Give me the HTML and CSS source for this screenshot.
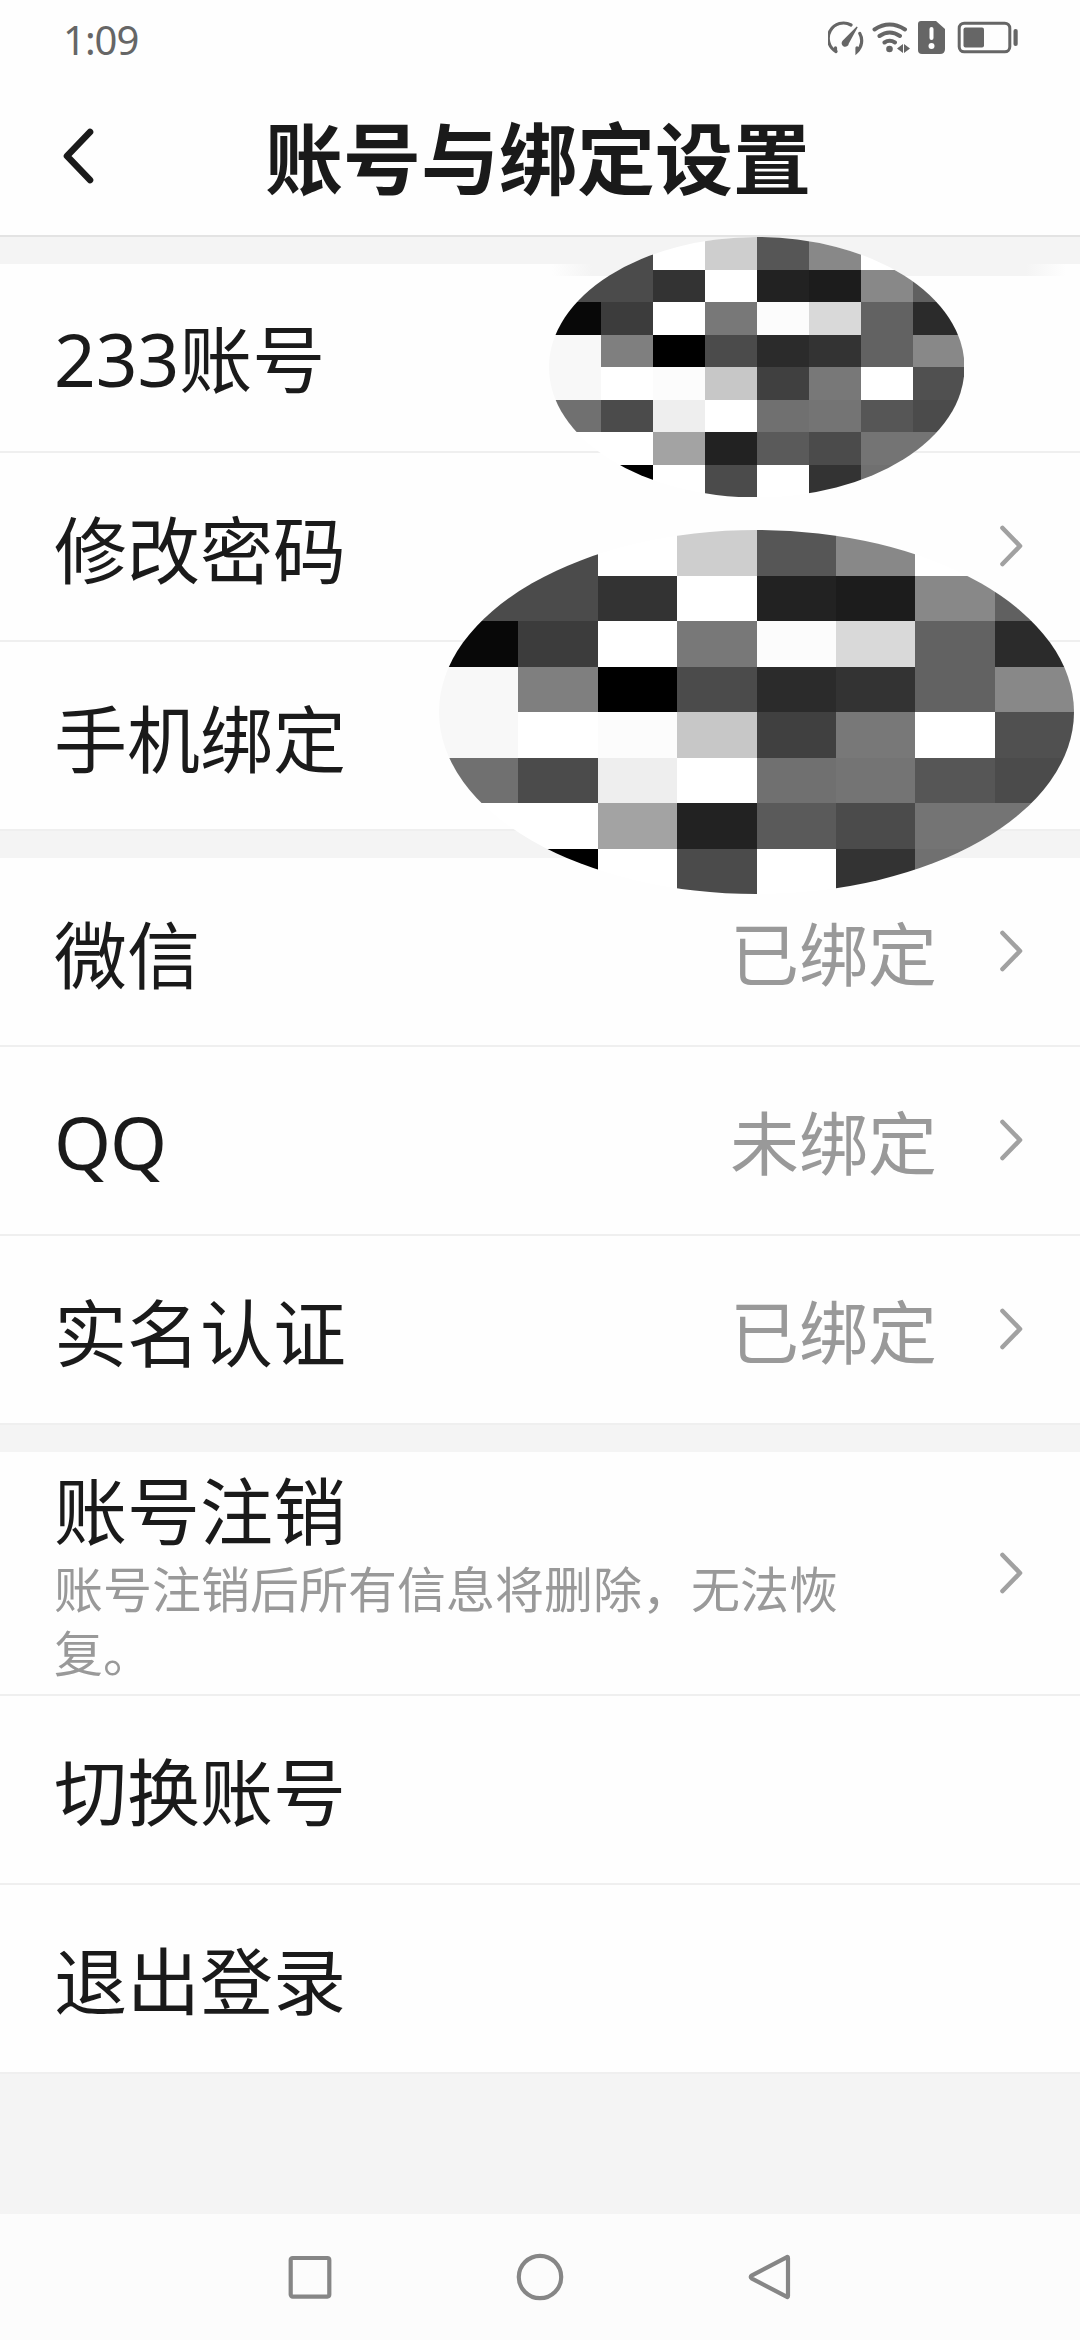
FILE: index.html
```
<!DOCTYPE html>
<html lang="zh-CN">
<head>
<meta charset="utf-8">
<title>账号与绑定设置</title>
<link rel="stylesheet" href="styles.css">
</head>
<body>
<svg class="defs" aria-hidden="true">
  <symbol id="chevron" viewBox="0 0 24 42"><path d="M2.5 3 L20 21 L2.5 39" fill="none" stroke="#a1a1a1" stroke-width="4.6" stroke-linecap="round" stroke-linejoin="round"/></symbol>
  <symbol id="mosaic" viewBox="0 0 8 8" preserveAspectRatio="none">
    <clipPath id="oval"><ellipse cx="4" cy="4" rx="4" ry="4"/></clipPath>
    <g clip-path="url(#oval)">
      <g shape-rendering="crispEdges">
      <rect width="8" height="8" fill="#fff"/>
      <path fill="#4b4b4b" d="M0 0h2v2H0zM7 5h1v1H7zM3 3h1v1H3zM5 6h1v1H5zM1 5h1v1H1zM3 7h1v1H3z"/>
      <path fill="#cecece" d="M3 0h1v1H3z"/>
      <path fill="#565656" d="M4 0h1v1H4zM6 5h1v1H6z"/>
      <path fill="#888" d="M5 0h1v1H5zM7 3h1v1H7zM6 1h1v1H6z"/>
      <path fill="#333" d="M2 1h1v1H2zM5 3h1v1H5zM5 7h1v1H5z"/>
      <path fill="#222" d="M4 1h1v1H4zM3 6h1v1H3z"/>
      <path fill="#1c1c1c" d="M5 1h1v1H5z"/>
      <path fill="#606060" d="M7 1h1v1H7z"/>
      <path fill="#080808" d="M0 2h1v1H0z"/>
      <path fill="#3c3c3c" d="M1 2h1v1H1z"/>
      <path fill="#787878" d="M3 2h1v1H3zM5 4h1v1H5z"/>
      <path fill="#fcfcfc" d="M4 2h1v1H4zM2 4h1v1H2z"/>
      <path fill="#d9d9d9" d="M5 2h1v1H5z"/>
      <path fill="#626262" d="M6 2h1v2H6z"/>
      <path fill="#2b2b2b" d="M7 2h1v1H7zM4 3h1v1H4z"/>
      <path fill="#f8f8f8" d="M0 3h1v2H0z"/>
      <path fill="#7f7f7f" d="M1 3h1v1H1z"/>
      <path fill="#000" d="M2 3h1v1H2zM1 7h1v1H1z"/>
      <path fill="#c7c7c7" d="M3 4h1v1H3z"/>
      <path fill="#404040" d="M4 4h1v1H4z"/>
      <path fill="#505050" d="M7 4h1v1H7z"/>
      <path fill="#707070" d="M0 5h1v1H0zM4 5h1v1H4zM6 7h2v1H6z"/>
      <path fill="#747474" d="M5 5h1v1H5zM6 6h2v1H6z"/>
      <path fill="#eee" d="M2 5h1v1H2z"/>
      <path fill="#a3a3a3" d="M2 6h1v1H2z"/>
      <path fill="#5a5a5a" d="M4 6h1v1H4z"/>
      </g>
    </g>
  </symbol>
</svg>

<div class="status">
  <span class="time">1:09</span>
  <svg class="status-icons" viewBox="0 0 190 36" fill="none" stroke="#666" stroke-linecap="round">
    <path d="M7.5 31 V27.8 M8 31.5 A14.8 14.8 0 0 1 23 5 M31.8 13.5 A14.8 14.8 0 0 1 29 31.5 V27.8" stroke-width="3.2"/>
    <path d="M28.7 6.5 L14.8 20.5 A3.6 3.6 0 1 0 20.8 23.5 L29.7 7.2 Z" fill="#666" stroke="none"/>
    <path d="M46.5 9.5 Q61.5 -.5 77 9.5 M51.5 16 Q61.5 9 72 16 M56.5 22.5 Q61.5 19 67 22.5" stroke-width="4"/>
    <circle cx="61.5" cy="29" r="3.3" fill="#666" stroke="none"/>
    <path d="M69 28.5 L75 24 V33 Z M76 24 L82 28.5 L76 33 Z" fill="#666" stroke="none"/>
    <path d="M93 1 H108 L117 9 V29 Q117 34 112 34 H94 Q90 34 90 30 V4 Q90 1 93 1 Z" fill="#666" stroke="none"/>
    <path d="M103.5 9 V18" stroke="#fff" stroke-width="4"/><circle cx="103.5" cy="26" r="3" fill="#fff" stroke="none"/>
    <rect x="131.2" y="3.2" width="50.6" height="28.6" rx="5" stroke-width="3"/>
    <rect x="135.5" y="7.5" width="20.5" height="20" rx="2" fill="#666" stroke="none"/>
    <rect x="185.5" y="9" width="4.2" height="17" rx="2" fill="#666" stroke="none"/>
  </svg>
</div>

<header class="header">
  <svg class="back" viewBox="0 0 32 56"><path d="M27 4 L4 28 L27 52" fill="none" stroke="#1a1a1a" stroke-width="6.6" stroke-linecap="round" stroke-linejoin="round"/></svg>
  <h1 class="title">账号与绑定设置</h1>
</header>

<main class="main">
  <section class="group">
    <div class="row"><span class="label"><span class="latin">233</span>账号</span></div>
    <div class="row"><span class="label">修改密码</span><svg class="chevron"><use href="#chevron"/></svg></div>
    <div class="row"><span class="label">手机绑定</span></div>
  </section>
  <section class="group">
    <div class="row"><span class="label">微信</span><span class="value">已绑定</span><svg class="chevron"><use href="#chevron"/></svg></div>
    <div class="row"><span class="label"><span class="latin latin-tight">QQ</span></span><span class="value">未绑定</span><svg class="chevron"><use href="#chevron"/></svg></div>
    <div class="row"><span class="label">实名认证</span><span class="value">已绑定</span><svg class="chevron"><use href="#chevron"/></svg></div>
  </section>
  <section class="group">
    <div class="row row-tall">
      <div class="texts"><div class="label">账号注销</div><p class="desc">账号注销后所有信息将删除，无法恢复。</p></div>
      <svg class="chevron"><use href="#chevron"/></svg>
    </div>
    <div class="row row-action"><span class="label">切换账号</span></div>
    <div class="row row-action"><span class="label">退出登录</span></div>
  </section>
</main>

<nav class="nav">
  <svg class="nav-icon" viewBox="0 0 50 50"><rect x="5.7" y="6" width="38.6" height="38.6" rx="2" /></svg>
  <svg class="nav-icon" viewBox="0 0 50 50"><circle cx="25" cy="25" r="21.2"/></svg>
  <svg class="nav-icon" viewBox="0 0 50 50"><path d="M41.5 5.4 Q43 4.3 43 6 V44 Q43 45.7 41.5 44.6 L7 26.6 Q4.4 25 7 23.4 Z"/></svg>
</nav>

<div class="halo"></div>
<svg class="cover cover-id"><use href="#mosaic"/></svg>
<svg class="cover cover-phone"><use href="#mosaic"/></svg>
</body>
</html>
```

FILE: styles.css
```
* { box-sizing: border-box; }

body {
  position: relative;
  display: flex;
  flex-direction: column;
  width: 1080px;
  height: 2340px;
  margin: 0;
  overflow: hidden;
  background: #f4f4f4;
  color: #1a1a1a;
  font-family: "Noto Sans CJK SC", sans-serif;
}

.defs { position: absolute; width: 0; height: 0; }

.status {
  display: flex;
  justify-content: space-between;
  align-items: center;
  height: 76px;
  padding: 0 62px 0 63px;
  background: #fefefe;
}

.time {
  padding-top: 3px;
  color: #666;
  font: 40px/76px "Noto Sans", sans-serif;
  letter-spacing: -1px;
}

.status-icons { width: 190px; height: 36px; }

.header {
  display: grid;
  grid-template-columns: 63px 32px 1fr 99px;
  align-items: center;
  height: 161px;
  border-bottom: 2px solid #e3e3e3;
  background: #fefefe;
}

.back { grid-column: 2; width: 32px; height: 56px; }

.title {
  grid-column: 3;
  margin: 0;
  font-size: 78px;
  font-weight: 700;
  line-height: 159px;
  text-align: center;
}

.main {
  display: flex;
  flex: 1;
  flex-direction: column;
  gap: 27px;
  padding-top: 27px;
}

.group { background: #fefefe; }

.row {
  display: flex;
  align-items: center;
  height: 189px;
  padding: 0 56px 1px 54px;
  border-bottom: 2px solid #efefef;
}

.row-tall { height: 244px; }

.row-action { padding-bottom: 4px; }

.label { font-size: 73px; line-height: 92px; white-space: nowrap; }

.latin { font-family: "Noto Sans", sans-serif; }

.latin-tight { letter-spacing: -1px; }

.value {
  margin-left: auto;
  color: #999;
  font-size: 69px;
  line-height: 92px;
}

.chevron { width: 24px; height: 42px; margin-left: auto; }

.value + .chevron { margin-left: 63px; }

.texts { width: 800px; }

.texts .label { line-height: 88px; }

.desc {
  margin: 4px 0 0;
  color: #999;
  font-size: 49px;
  line-height: 64px;
}

.nav {
  display: flex;
  justify-content: center;
  align-items: center;
  gap: 180px;
  height: 126px;
  background: #fcfcfc;
}

.nav-icon {
  width: 50px;
  height: 50px;
  fill: none;
  stroke: #868686;
  stroke-width: 4.2;
  stroke-linejoin: round;
}

.halo {
  position: absolute;
  top: 264px;
  left: 552px;
  width: 514px;
  height: 12px;
  background: linear-gradient(90deg, transparent, #f4f4f4 40px, #f4f4f4 474px, transparent);
}

.cover { position: absolute; }

.cover-id { top: 236.5px; left: 548.5px; width: 415.5px; height: 260.5px; }

.cover-phone { top: 530px; left: 438.5px; width: 635px; height: 364px; }
```
